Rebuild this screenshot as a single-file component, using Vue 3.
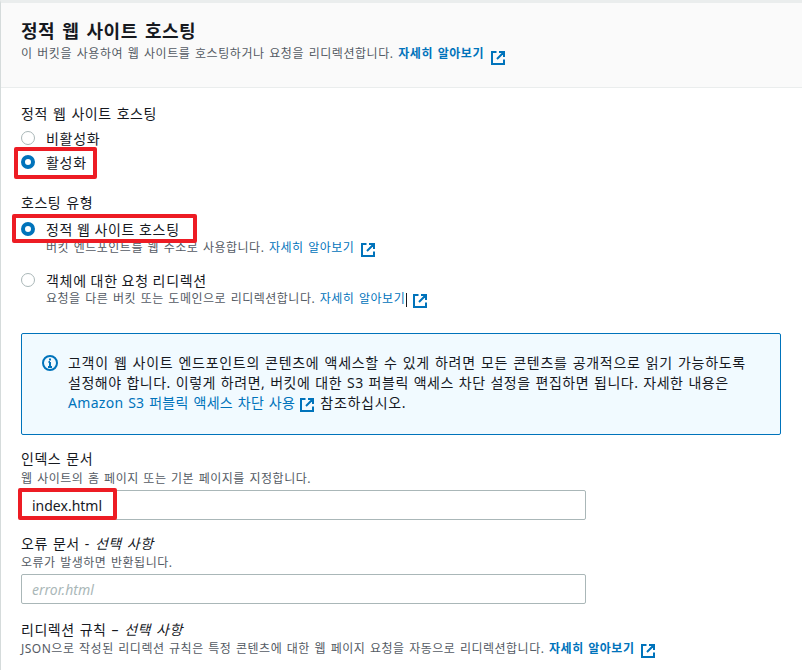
<script setup>
const ext = 'M5.5 1H1v12h12V8.5M8 1h5v5M13 1L6 8';
</script>

<template>
  <div class="page">
    <header class="head">
      <h2 class="title">정적 웹 사이트 호스팅</h2>
      <p class="sub">이 버킷을 사용하여 웹 사이트를 호스팅하거나 요청을 리디렉션합니다. <a class="link strong">자세히 알아보기</a>
        <svg class="ext" viewBox="0 0 14 14"><path :d="ext" /></svg></p>
    </header>
    <main class="body">
      <section class="group first">
        <div class="label">정적 웹 사이트 호스팅</div>
        <div class="radio"><span class="dot"></span><span>비활성화</span></div>
        <div class="radio"><span class="dot on"></span><span>활성화</span><i class="mark m1"></i></div>
      </section>
      <section class="group second">
        <div class="label">호스팅 유형</div>
        <div class="radio"><span class="dot on"></span><span>정적 웹 사이트 호스팅</span><i class="mark m2"></i></div>
        <p class="desc indent">버킷 엔드포인트를 웹 주소로 사용합니다. <a class="link">자세히 알아보기</a>
          <svg class="ext" viewBox="0 0 14 14"><path :d="ext" /></svg></p>
        <div class="radio r2"><span class="dot"></span><span>객체에 대한 요청 리디렉션</span></div>
        <p class="desc indent">요청을 다른 버킷 또는 도메인으로 리디렉션합니다. <a class="link">자세히 알아보기</a><i class="caret"></i>
          <svg class="ext" viewBox="0 0 14 14"><path :d="ext" /></svg></p>
      </section>
      <aside class="alert">
        <svg class="info" viewBox="0 0 16 16"><circle cx="8" cy="8" r="7" /><path d="M8 7v5M6 12h4M6.5 7H8M8 3.4v2" /></svg>
        <p>고객이 웹 사이트 엔드포인트의 콘텐츠에 액세스할 수 있게 하려면 모든 콘텐츠를 공개적으로 읽기 가능하도록<br><span class="tight">설정해야 합니다. 이렇게 하려면, 버킷에 대한 S3 퍼블릭 액세스 차단 설정을 편집하면 됩니다. 자세한 내용은</span><br><a class="link tighter">Amazon S3 퍼블릭 액세스 차단 사용</a>
          <svg class="ext" viewBox="0 0 14 14"><path :d="ext" /></svg> 참조하십시오.</p>
      </aside>
      <section class="field f1">
        <div class="label">인덱스 문서</div>
        <p class="desc">웹 사이트의 홈 페이지 또는 기본 페이지를 지정합니다.</p>
        <div class="input">index.html<i class="mark m3"></i></div>
      </section>
      <section class="field f2">
        <div class="label">오류 문서 - <em>선택 사항</em></div>
        <p class="desc">오류가 발생하면 반환됩니다.</p>
        <div class="input ph">error.html</div>
      </section>
      <section class="field f3">
        <div class="label">리디렉션 규칙 – <em>선택 사항</em></div>
        <p class="desc">JSON으로 작성된 리디렉션 규칙은 특정 콘텐츠에 대한 웹 페이지 요청을 자동으로 리디렉션합니다. <a class="link strong">자세히 알아보기</a>
          <svg class="ext" viewBox="0 0 14 14"><path :d="ext" /></svg></p>
      </section>
    </main>
  </div>
</template>

<style scoped>
.page {
  width: 802px;
  height: 670px;
  box-sizing: border-box;
  overflow: hidden;
  background: #fff;
  border-left: 1px solid #d5dbdb;
  border-top: 3px solid #eaeded;
  font-family: "Noto Sans", "Noto Sans CJK KR", sans-serif;
  font-size: 14px;
  color: #16191f;
}
.head {
  height: 85px;
  box-sizing: border-box;
  padding: 17px 20px 0;
  background: #fafafa;
  border-bottom: 1px solid #eaeded;
}
.title {
  margin: 0;
  font-size: 18px;
  line-height: 22px;
  font-weight: 700;
  letter-spacing: 0.5px;
  word-spacing: 2px;
}
.sub {
  margin: 3px 0 0;
  font-size: 12px;
  line-height: 18px;
  color: #545b64;
  letter-spacing: 0.55px;
  word-spacing: 1px;
  white-space: nowrap;
}
.sub .ext { vertical-align: -3px; }
.link { color: #0073bb; }
.strong { font-weight: 700; }
.ext {
  width: 14px;
  height: 14px;
  margin: -4px 0 -4px 7px;
  vertical-align: -1px;
  fill: none;
  stroke: #0073bb;
  stroke-width: 2;
}
.caret {
  display: inline-block;
  width: 1px;
  height: 14px;
  margin: -2px -1px -2px 1px;
  vertical-align: -2px;
  background: #16191f;
}
.body { padding: 0 20px; }
.group.first { padding-top: 16px; }
.group.second { padding-top: 19px; }
.group.first .label { margin-bottom: 2px; }
.group.second .label { margin-bottom: 4px; }
.label {
  font-size: 14px;
  line-height: 20px;
  letter-spacing: 0.5px;
  word-spacing: 1px;
  white-space: nowrap;
}
.label em { font-style: italic; }
.radio {
  display: flex;
  align-items: center;
  gap: 11px;
  height: 24px;
  font-size: 14px;
  letter-spacing: 0.7px;
  word-spacing: -0.5px;
  white-space: nowrap;
  position: relative;
  width: max-content;
}
.radio.r2 { margin-top: 12px; }
.dot {
  width: 14px;
  height: 14px;
  box-sizing: border-box;
  border: 1px solid #aab7b8;
  border-radius: 50%;
  background: #fff;
}
.dot.on { border: 4px solid #0073bb; }
.desc {
  margin: 0;
  font-size: 12px;
  line-height: 16px;
  color: #545b64;
  letter-spacing: 0.5px;
  word-spacing: 1px;
  white-space: nowrap;
}
.desc.indent { padding-left: 25px; margin-top: -1px; }
.alert {
  display: flex;
  gap: 10px;
  margin-top: 26px;
  height: 102px;
  box-sizing: border-box;
  padding: 19px 20px;
  width: 760px;
  background: #f1faff;
  border: 1px solid #0073bb;
  border-radius: 2px;
}
.alert p {
  margin: 0;
  font-size: 14px;
  line-height: 20px;
  letter-spacing: 0.7px;
  word-spacing: 0.8px;
  white-space: nowrap;
}
.alert .tight { letter-spacing: 0.5px; }
.alert .tighter { letter-spacing: 0.3px; }
.alert .ext { margin-left: 5px; margin-right: 1px; vertical-align: 0; }
.info {
  flex: none;
  width: 16px;
  height: 16px;
  margin-top: 2px;
  fill: none;
  stroke: #0073bb;
  stroke-width: 2;
}
.field.f1 { margin-top: 14px; }
.field.f1 .desc { margin-top: 2px; }
.field.f2 { margin-top: 14px; }
.field.f2 .desc { margin-top: 1px; }
.field.f3 { margin-top: 16px; }
.field.f3 .desc { margin-top: 1px; }
.input {
  position: relative;
  box-sizing: border-box;
  width: 565px;
  height: 30px;
  margin-top: 3px;
  padding: 0 10px;
  display: flex;
  align-items: center;
  border: 1px solid #aab7b8;
  border-radius: 2px;
  font-size: 14px;
}
.input.ph {
  color: #aab7b8;
  font-style: italic;
}
.mark {
  position: absolute;
  border: 4px solid #ed1c24;
  border-radius: 2px;
  pointer-events: none;
}
.m1 { left: -7px; top: -3px; width: 75px; height: 24px; }
.m2 { left: -9px; top: -3px; width: 177px; height: 21px; }
.m3 { left: -4px; top: -3px; width: 91px; height: 24px; }
</style>
